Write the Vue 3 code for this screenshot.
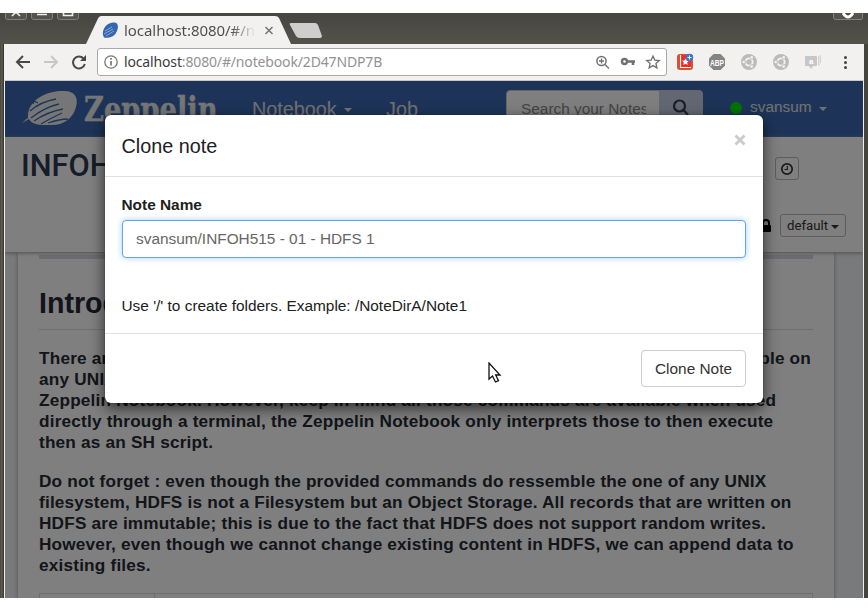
<script setup>
import { ref } from 'vue'

const noteName = ref('svansum/INFOH515 - 01 - HDFS 1')
const introLines = [
  ['There are', 'available on'],
  ['any UNIX'],
  ['Zeppelin Notebook. However, keep in mind all those commands are available when used'],
  ['directly through a terminal, the Zeppelin Notebook only interprets those to then execute'],
  ['then as an SH script.'],
]
const warningLines = [
  'Do not forget : even though the provided commands do ressemble the one of any UNIX',
  'filesystem, HDFS is not a Filesystem but an Object Storage. All records that are written on',
  'HDFS are immutable; this is due to the fact that HDFS does not support random writes.',
  'However, even though we cannot change existing content in HDFS, we can append data to',
  'existing files.',
]
</script>

<template>
  <div class="window">
    <header class="titlebar">
      <svg class="chrome" width="868" height="31" viewBox="0 13 868 31">
        <g fill="#55534c" stroke="#83817a">
          <path d="M5.500 13v4q0 2.500 2 2.500h17q2 0 2-2.500v-4M31.500 13v4q0 2.500 2 2.500h17q2 0 2-2.500v-4M57.500 13v4q0 2.500 2 2.500h17q2 0 2-2.500v-4M833.500 13v4q0 2.500 2 2.500h26q1 0 1-2v-4.500" />
        </g>
        <path d="M12 16l3-3h2l3 3M37 14.500h10M63.500 13v2.500h9V13" fill="none" stroke="#eee" stroke-width="1.600" />
        <path d="M843 13q5 8 10 0" fill="none" stroke="#fff" stroke-width="3" />
        <path d="M86 44L98 18.500Q99 16 101 16H275Q278 16 279 18L291 44Z" fill="#f2f1f0" />
        <path d="M291 23h24q2 0 3 2l4 11q0 2-2 2h-20q-3 0-4-2l-6-11q-1-2 1-2z" fill="#cfcecd" />
        <g transform="translate(102 22)">
          <path d="M1 13C0 8 4 1 11 .5C17-.5 17 6 14 11C11 16 5 16 2 15.500Z" fill="#3466b0" />
          <path d="M3 9l7-4M2 12l9-5M4 14l8-5" stroke="#a8c7e4" stroke-width=".7" />
        </g>
        <path d="M265.500 27l7 7m0-7l-7 7" stroke="#777" stroke-width="1.600" />
      </svg>
      <span class="tab-title">localhost:8080/#/n</span>
    </header>

    <div class="toolbar">
      <svg class="nav-icons" width="92" height="36" viewBox="5 44 92 36" fill="none" stroke-width="2">
        <path d="M30 62H17m6-6l-6 6 6 6" stroke="#484848" />
        <path d="M44 62h13m-6-6l6 6-6 6" stroke="#c8c7c6" />
        <path d="M83.500 58.500A6 6 0 1 0 84.800 64" stroke="#484848" />
        <path d="M86 55v6h-6z" fill="#484848" />
      </svg>
      <div class="address">
        <svg width="20" height="26" viewBox="101 49 20 26" fill="none" stroke="#777">
          <circle cx="111" cy="62" r="6.200" stroke-width="1.300" /><path d="M111 61v4.500M111 58v1.700" stroke-width="1.700" />
        </svg>
        <span class="url"><b>localhost</b>:8080/#/notebook/2D47NDP7B</span>
        <svg class="address-tools" width="68" height="26" viewBox="595 49 68 26" fill="none" stroke="#707070" stroke-width="1.500">
          <circle cx="601.500" cy="61" r="4.600" /><path d="M605 64.500l4 4M599 61h5m-2.500-2.500v5" stroke-width="1.300" />
          <circle cx="624.500" cy="61.500" r="2.500" stroke-width="2.400" /><path d="M627 61.500h8M633 62v3" stroke-width="2.600" />
          <path d="M653 56l1.800 4.100 4.500.4-3.400 3 1 4.400-3.900-2.300-3.900 2.300 1-4.400-3.400-3 4.500-.4z" stroke-width="1.300" />
        </svg>
      </div>
      <svg class="extensions" width="196" height="36" viewBox="667 44 196 36">
        <rect x="677" y="54" width="16" height="16" rx="3" fill="#c95837" /><rect x="679" y="55" width="12" height="13" rx="1" fill="#f32b20" />
        <path d="M680.500 55v13M680 67.500h11" stroke="#fff" stroke-width="1.200" />
        <path d="M685.500 58.500l1 2 2.500.3-1.800 1.700.5 2.500-2.200-1.200-2.200 1.200.5-2.500-1.800-1.700 2.500-.3z" fill="#fff" />
        <circle cx="689.500" cy="57.500" r="3.700" fill="#3976d9" /><path d="M687.500 57.500h4m-2-2v4" stroke="#fff" />
        <path d="M713.500 54h7l4.500 4.500v7l-4.500 4.500h-7l-4.500-4.500v-7z" fill="#858585" />
        <text x="710" y="65.500" class="abp" textLength="14" lengthAdjust="spacingAndGlyphs">ABP</text>
        <g v-for="x in [749, 781]" :key="x" :transform="`translate(${x} 62)`">
          <circle r="8" fill="#bbb" /><circle r="3.600" fill="none" stroke="#f4f4f4" stroke-width="1.800" />
          <circle cx="-4.900" r="2.100" fill="#bbb" /><circle cx="2.600" cy="-4.400" r="2.100" fill="#bbb" /><circle cx="2.600" cy="4.400" r="2.100" fill="#bbb" />
          <circle cx="-5.300" r="1.300" fill="#f4f4f4" /><circle cx="2.700" cy="-4.600" r="1.300" fill="#f4f4f4" /><circle cx="2.700" cy="4.600" r="1.300" fill="#f4f4f4" />
        </g>
        <path d="M818 56h1.500v9.500h-1.500zM820 55h1v8h-1z" fill="#d4d4d4" /><path d="M806 56h10q1 0 1 1v8q0 1-1 1h-3l-2 3-2-3h-3q-1 0-1-1v-8q0-1 1-1z" fill="#c7c7c7" />
        <text x="809" y="64" class="quote">a</text>
        <circle v-for="y in [57.500, 62.500, 67.500]" :key="y" cx="845.500" :cy="y" r="1.500" fill="#444" />
      </svg>
    </div>

    <main class="page">
      <nav class="navbar">
        <svg class="logo" width="214" height="56" viewBox="5 81 214 56">
          <path d="M28 115C29 100 46 91 62 91C74 90 79 97 76 107C73 118 64 126 49 125C40 125 32 125 29 119L22 123Q26 119 28 118Z" fill="#ededed" />
          <path d="M30 111Q40 102 56 99M31 118Q45 107 59 104M34 121Q47 112 63 109M41 124Q51 118 62 113M48 123Q60 119 68 119M33 104l1-3 4 2" fill="none" stroke="#3b69b1" stroke-width="1.300" />
          <text x="84" y="121" class="wordmark" textLength="133.500" lengthAdjust="spacingAndGlyphs">Zeppelin</text>
        </svg>
        <span class="nav-link notebook">Notebook</span><i class="caret"></i>
        <span class="nav-link job">Job</span>
        <div class="search">
          <span class="search-text">Search your Notes</span>
          <span class="search-button"><svg width="18" height="18" viewBox="0 0 18 18" fill="none" stroke="#333e52" stroke-width="2.200"><circle cx="7.500" cy="7" r="5.500" /><path d="M11.500 11l4.500 5" /></svg></span>
        </div>
        <i class="status"></i><span class="user">svansum</span><i class="caret user-caret"></i>
      </nav>

      <section class="note-header">
        <h1>INFOH515</h1>
        <div class="header-actions">
          <button class="clock"><svg width="14" height="14" viewBox="0 0 14 14" fill="none" stroke="#333" stroke-width="1.700"><circle cx="7" cy="7" r="5.200" /><path d="M7.300 4v3.500H4.500" stroke-width="1.200" /></svg></button>
          <div class="mode">
            <svg width="12" height="16" viewBox="0 0 12 16"><path d="M3 7V5a3 3 0 0 1 6 0v2" fill="none" stroke="#000" stroke-width="2" /><rect x="1" y="7" width="10" height="7" rx="1" /></svg>
            <button class="default">default<i class="caret"></i></button>
          </div>
        </div>
      </section>

      <section class="workspace">
        <article class="paper">
          <div class="progress"></div>
          <h2>Introduction</h2>
          <div class="paragraph">
            <div v-for="(line, i) in introLines" :key="i" class="line"><span v-for="part in line" :key="part">{{ part }}</span></div>
          </div>
          <div class="paragraph">
            <div v-for="line in warningLines" :key="line" class="line">{{ line }}</div>
          </div>
          <div class="table"><span></span></div>
        </article>
      </section>

      <div class="backdrop">
        <div class="modal">
          <header class="modal-header"><h3>Clone note</h3><svg width="12" height="12" viewBox="0 0 12 12"><path d="M1.500 1.500l9 9m0-9l-9 9" stroke="#ccc" stroke-width="3" /></svg></header>
          <div class="modal-body">
            <label for="note-name">Note Name</label>
            <input id="note-name" v-model="noteName" />
            <p>Use '/' to create folders. Example: /NoteDirA/Note1</p>
          </div>
          <footer><button class="clone">Clone Note</button></footer>
        </div>
      </div>
      <svg class="pointer" width="14" height="22" viewBox="0 0 14 22"><path d="M1 1v16l3.500-3 3 6 3-1.300-2.800-5.700H12z" fill="#fff" stroke="#111" stroke-width="1.300" /></svg>
    </main>
  </div>
</template>

<style>
body { margin: 0; background: #fff; }
</style>

<style scoped>
* { box-sizing: border-box; }
.window { width: 868px; height: 585px; margin-top: 13px; overflow: hidden; background: linear-gradient(90deg, #45423a 0, #666258 2px, #3b3a32 3px, #3b3a32 4px, #45453e 5px); font-family: "Liberation Sans", sans-serif; }
.titlebar { height: 31px; position: relative; background: linear-gradient(#454640, #54534a); }
.chrome { display: block; }
.tab-title { position: absolute; left: 124px; top: 7px; font: 15px/20px "Noto Sans", sans-serif; letter-spacing: -.05px; color: transparent; background: linear-gradient(90deg, #4c4c4c 82%, #ddd 98%); background-clip: text; }
.toolbar { width: 860px; height: 36px; margin-left: 4px; padding-left: 1px; display: flex; align-items: center; background: #f2f1f0; }
.nav-icons, .extensions { flex: none; }
.address { width: 570px; height: 28px; flex: none; border: 1px solid #aaa; border-radius: 3px; background: #fff; display: flex; align-items: center; padding: 0 3px; }
.url { font: 14px/20px "Noto Sans", sans-serif; letter-spacing: -.15px; color: #929292; margin-left: 3px; white-space: nowrap; }
.url b { font-weight: 400; color: #3a3a3a; }
.address-tools { margin-left: auto; }
.abp { font: bold 8.500px "Liberation Sans", sans-serif; fill: #fff; }
.quote { font: bold 8px "Liberation Sans", sans-serif; fill: #fff; }
.page { width: 860px; height: 518px; margin-left: 4px; border: solid #eee; border-width: 1px 1px 0; border-top-color: #c9c9c9; position: relative; overflow: hidden; background: #fff; }
.navbar { height: 56px; background: #3b69b1; display: flex; color: #e3e3e3; }
.logo { flex: none; }
.wordmark { font: bold 33px "DejaVu Serif", serif; fill: #ededed; stroke: #ededed; stroke-width: .4px; }
.nav-link { font-size: 19.800px; line-height: 56px; flex: none; }
.notebook { margin-left: 33px; width: 85px; }
.caret { width: 0; height: 0; border: 4px solid transparent; border-top-color: currentColor; border-bottom: 0; display: inline-block; flex: none; }
.navbar .caret { margin: 27px 0 0 7px; }
.navbar .user-caret { margin: 26px 0 0 8px; }
.job { margin-left: 34px; width: 32px; }
.search { height: 34px; margin: 9px 0 0 88px; width: 197px; background: #fff; border: 1px solid #ccc; border-radius: 4px; display: flex; overflow: hidden; flex: none; }
.search-text { font-size: 15.400px; line-height: 35px; color: #888; width: 125px; margin: 0 13px 0 14px; white-space: nowrap; flex: none; overflow: hidden; }
.search-button { width: 44px; background: #c4cfe3; padding: 8px 0 0 13px; }
.status { margin: 21px 0 0 27px; width: 12px; height: 12px; border-radius: 50%; background: #00e600; flex: none; }
.user { margin-left: 8px; font-size: 15.400px; line-height: 52px; width: 61px; }
.note-header { height: 115px; background: #fff; display: flex; justify-content: space-between; padding: 10px 16px 0 16px; box-shadow: 0 1px 4px #999; position: relative; }
h1 { margin: 0; font: 500 30.800px/38px Roboto, sans-serif; color: #2c3a52; }
.header-actions { width: 83px; }
button { border: 1px solid #bbb; border-radius: 3px; background: #fff; color: #333; }
.clock { width: 24px; height: 23px; margin: 10px 0 0 11px; padding: 4px; display: block; }
.clock svg { display: block; }
.mode { display: flex; margin: 34px 0 0 -4px; gap: 8px; align-items: center; }
.default { width: 66px; height: 23px; padding: 0; font: 13.200px Roboto, sans-serif; flex: none; }
.default .caret { margin: 0 0 1px 3px; border-width: 4.500px 4.500px 0; }
.workspace { background: #f1f4f8; padding: 0 29px 0 13px; height: 350px; }
.paper { background: #fff; height: 350px; padding: 3px 21px 0; box-shadow: 0 0 4px #999; }
.progress { height: 4px; background: #d8d9e1; }
h2 { margin: 0; height: 71px; padding-top: 27px; border-bottom: 1px solid #ddd; font-size: 28.600px; line-height: 35px; color: #222a36; }
.paragraph { padding-top: 18px; font-size: 17.200px; line-height: 21px; font-weight: 700; color: #252a32; letter-spacing: .195px; }
.line { white-space: nowrap; display: flex; justify-content: space-between; width: 772px; height: 21px; }
.table { height: 20px; border: 1px solid #ddd; margin-top: 17px; }
.table span { display: block; width: 115px; height: 20px; border-right: 1px solid #ddd; }
.backdrop { position: absolute; inset: 0; background: rgba(0, 0, 0, .5); padding: 34px 0 0 100px; }
.modal { width: 658px; height: 288px; border-radius: 6px; background: #fff; box-shadow: 0 5px 15px rgba(0, 0, 0, .65), 0 0 1px #222; color: #212121; }
.modal-header { height: 62px; border-bottom: 1px solid #e1e1e1; display: flex; justify-content: space-between; padding: 19px 17px 0 16.500px; }
h3 { margin: 0; font-size: 19.800px; line-height: 24px; font-weight: 400; }
.modal-body { height: 156px; padding: 18px 17px 0 16.500px; font-size: 15.400px; line-height: 20px; }
label { display: block; font-weight: 700; }
input { display: block; width: 624px; height: 38px; margin: 5px 0 0 .5px; padding: 0 13px; border: 1px solid #66a3f0; border-radius: 4px; color: #666; font: 15.400px "Liberation Sans", sans-serif; box-shadow: 0 0 6px #a6cef8; }
.modal-body p { margin: 38px 0 0; }
footer { height: 70px; border-top: 1px solid #e1e1e1; display: flex; justify-content: flex-end; padding: 16px 17px; }
.clone { width: 105px; height: 37px; padding: 0; border-color: #ccc; border-radius: 4px; font: 15.400px "Liberation Sans", sans-serif; }
.pointer { position: absolute; left: 482.500px; top: 281px; }
</style>
